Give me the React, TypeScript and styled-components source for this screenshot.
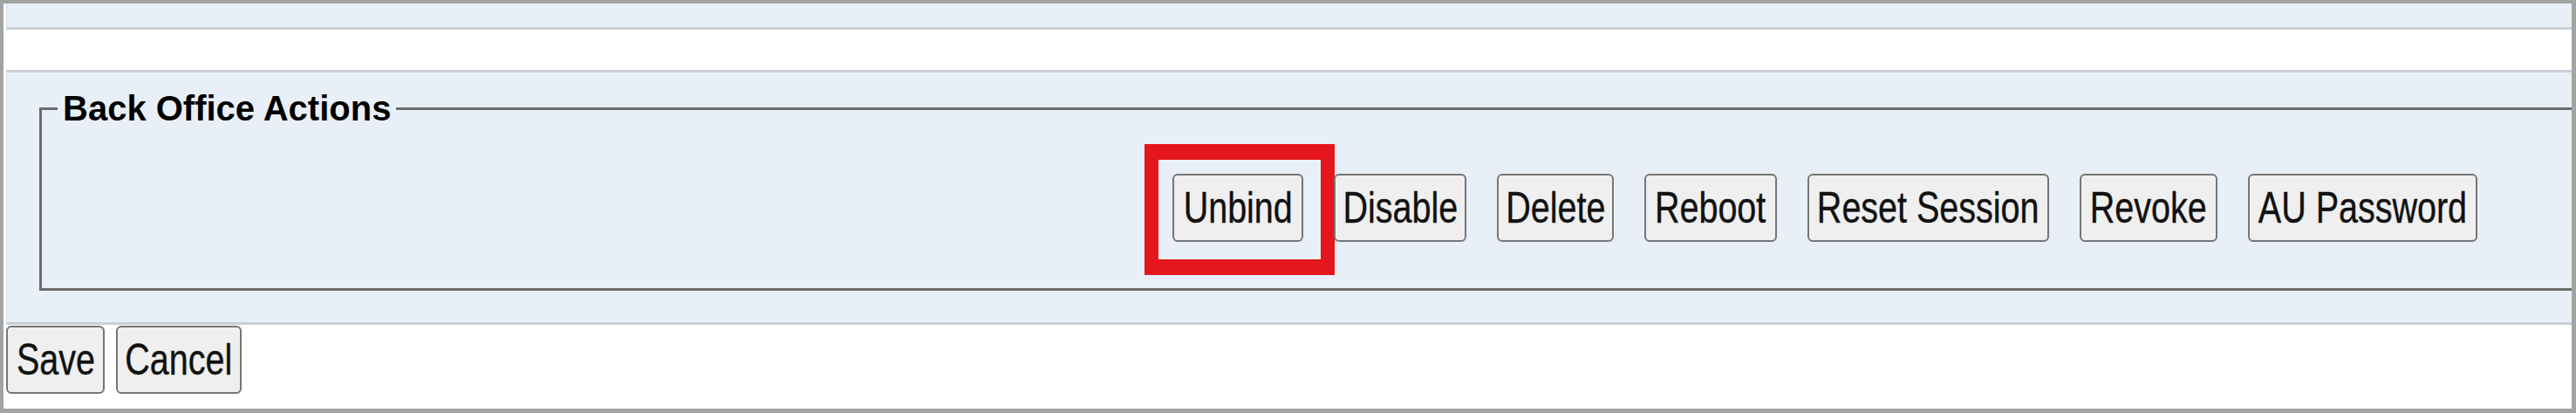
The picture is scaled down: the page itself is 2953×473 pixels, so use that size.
import styled, { createGlobalStyle } from "styled-components";

const GlobalStyle = createGlobalStyle`
  html, body {
    margin: 0;
    padding: 0;
    background: #ffffff;
  }
  body {
    width: 2953px;
    height: 473px;
    overflow: hidden;
  }
`;

const Frame = styled.div`
  box-sizing: border-box;
  width: 2953px;
  height: 473px;
  border: 4px solid #a3a3a3;
  border-right-width: 5px;
  border-bottom-width: 5px;
  padding-left: 3px;
  background: #ffffff;
  display: flex;
  flex-direction: column;
  overflow: hidden;
`;

const Panel = styled.div`
  background: #e9eff7;
  border-left: 1px solid #d6dce5;
  border-bottom: 3px solid #c9ced7;
`;

const TopPanel = styled(Panel)`
  height: 27px;
`;

const ActionsPanel = styled(Panel)`
  margin-top: 46px;
  border-top: 3px solid #c9ced7;
  padding: 19px 0 36px 37px;
`;

const Fieldset = styled.fieldset`
  margin: 0;
  min-width: 0;
  border: 3px solid #6c6c6c;
  border-right: none;
  padding: 52px 108px 53px 18px;
`;

const Legend = styled.legend`
  padding: 0 6px;
  font-family: "Liberation Sans", Arial, sans-serif;
  font-weight: 700;
  font-size: 40px;
  line-height: 45px;
  color: #000000;
`;

const ActionRow = styled.div`
  display: flex;
  justify-content: flex-end;
  align-items: center;
  gap: 35px;
`;

const Slot = styled.div`
  position: relative;
  display: flex;
`;

const Highlight = styled.div`
  position: absolute;
  top: -34px;
  left: -32px;
  right: -36px;
  bottom: -38px;
  border: 18px solid #e5161d;
  border-left-width: 16px;
  border-right-width: 16px;
  pointer-events: none;
`;

const Button = styled.button<{ $w: number }>`
  box-sizing: border-box;
  display: inline-flex;
  align-items: center;
  justify-content: center;
  width: ${(p) => p.$w}px;
  height: 78px;
  margin: 0;
  padding: 0;
  border: 2px solid #767676;
  border-radius: 6px;
  background: #efefef;
  color: #111111;
  font-family: "Liberation Sans", Arial, sans-serif;
  font-size: 50px;
  line-height: 1;
  white-space: nowrap;
  overflow: visible;
  cursor: pointer;
`;

const Label = styled.span`
  display: inline-block;
  flex-shrink: 0;
  transform: scaleX(0.79);
  transform-origin: center;
  -webkit-text-stroke: 0.4px #111111;
`;

const Footer = styled.div`
  display: flex;
  gap: 13px;
  margin-top: 1px;
`;

const actions = [
  { label: "Unbind", w: 150, marked: true },
  { label: "Disable", w: 152 },
  { label: "Delete", w: 134 },
  { label: "Reboot", w: 152 },
  { label: "Reset Session", w: 277 },
  { label: "Revoke", w: 158 },
  { label: "AU Password", w: 263 },
];

export default function App() {
  return (
    <>
      <GlobalStyle />
      <Frame>
        <TopPanel />
        <ActionsPanel>
          <Fieldset>
            <Legend>Back Office Actions</Legend>
            <ActionRow>
              {actions.map((a) => (
                <Slot key={a.label}>
                  <Button type="button" $w={a.w}>
                    <Label>{a.label}</Label>
                  </Button>
                  {a.marked && <Highlight />}
                </Slot>
              ))}
            </ActionRow>
          </Fieldset>
        </ActionsPanel>
        <Footer>
          <Button type="button" $w={113}>
            <Label>Save</Label>
          </Button>
          <Button type="button" $w={144}>
            <Label>Cancel</Label>
          </Button>
        </Footer>
      </Frame>
    </>
  );
}
